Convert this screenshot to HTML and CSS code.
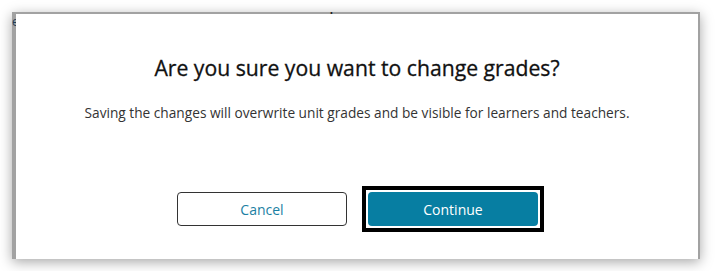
FILE: index.html
```html
<!DOCTYPE html>
<html lang="en">
<head>
    <meta charset="UTF-8">
    <meta name="viewport" content="width=device-width, initial-scale=1.0">
    <title>Change grades</title>
    <link rel="stylesheet" href="styles.css">
</head>
<body>
    <div class="shot">
        <!-- page behind the dialog, dimmed -->
        <div class="backdrop">
            <span class="course-title">BTEC L3 Int Business Sub Diploma L3 23 SM 70712.23</span>
            <span class="side-letter">e</span>
        </div>

        <div class="modal" role="dialog" aria-labelledby="modal-title">
            <h2 id="modal-title">Are you sure you want to change grades?</h2>
            <p>Saving the changes will overwrite unit grades and be visible for learners and teachers.</p>
            <div class="actions">
                <button class="btn btn-secondary">Cancel</button>
                <span class="focus-ring">
                    <button class="btn btn-primary">Continue</button>
                </span>
            </div>
        </div>
    </div>
</body>
</html>
```

FILE: styles.css
```css
body {
    margin: 0;
    padding: 12px;
    background-color: #fff;
    font-family: 'Open Sans', 'Noto Sans', sans-serif;
}
.shot {
    position: relative;
    width: 688px;
    height: 247px;
    box-sizing: border-box;
    padding: 2px 2px 0 4px;
    background-color: #a2a2a2;
    box-shadow: 0 3px 12px rgba(0, 0, 0, 0.35);
    overflow: hidden;
}
.backdrop {
    position: absolute;
    inset: 0;
}
.course-title {
    position: absolute;
    left: 72px;
    top: -21px;
    font-size: 19px;
    color: #1c1c1c;
    white-space: nowrap;
}
.side-letter {
    position: absolute;
    left: 0;
    top: 1px;
    font-size: 12px;
    color: #1d3b55;
}
.modal {
    position: relative;
    height: 100%;
    background-color: #fff;
    text-align: center;
    padding-top: 40px;
    box-sizing: border-box;
}
.modal h2 {
    margin: 0;
    font-size: 21.2px;
    font-weight: 400;
    line-height: 28px;
    color: #111;
    -webkit-text-stroke: 0.3px #111;
}
.modal p {
    margin: 21px 0 0;
    font-size: 13.7px;
    line-height: 20px;
    color: #333;
}
.actions {
    display: flex;
    justify-content: center;
    align-items: center;
    gap: 15px;
    margin-top: 63px;
    padding-left: 7px;
}
.btn {
    width: 170px;
    height: 34px;
    border-radius: 4px;
    font-family: inherit;
    font-size: 14px;
    cursor: pointer;
}
.btn-secondary {
    background-color: #fff;
    border: 1px solid #333;
    color: #1b7fa3;
}
.btn-primary {
    display: block;
    background-color: #077ea2;
    border: none;
    color: #fff;
}
.focus-ring {
    display: block;
    padding: 2px;
    border: 4px solid #000;
    background-color: #fff;
}
```
